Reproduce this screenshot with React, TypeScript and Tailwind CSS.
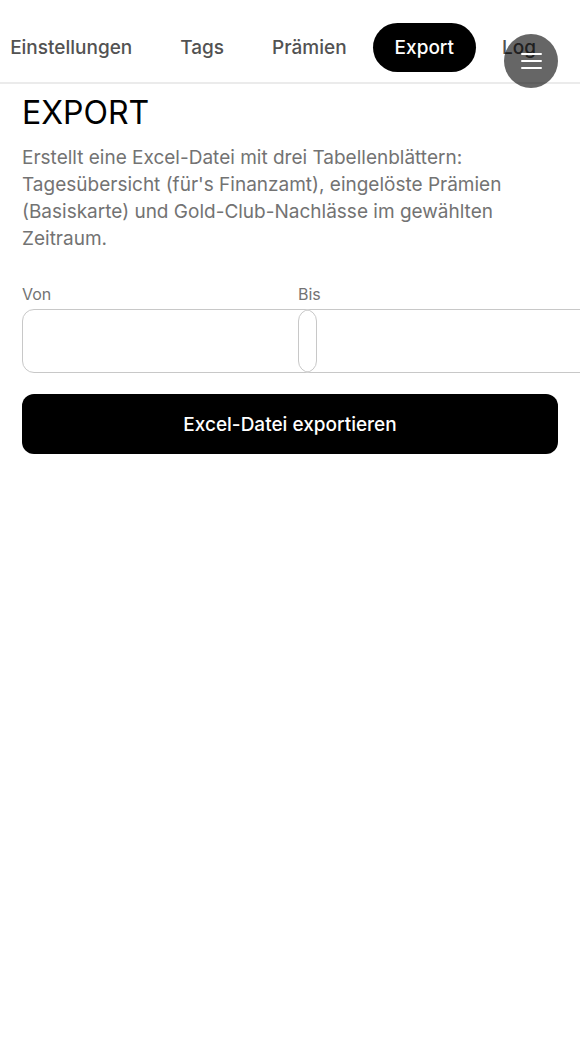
import React, { useState } from 'react';

const TABS = ['Einstellungen', 'Tags', 'Prämien', 'Export', 'Log'];

interface DateFieldProps {
  id: string;
  label: string;
  value: string;
  onChange: (value: string) => void;
}

const DateField: React.FC<DateFieldProps> = ({ id, label, value, onChange }) => (
  <div className="min-w-0">
    <label htmlFor={id} className="block text-base leading-6 text-[#737373] mb-[3px]">{label}</label>
    {/* Empty date fields stay blank, as on iOS */}
    <input
      type="date"
      id={id}
      value={value}
      onChange={(e) => onChange(e.target.value)}
      className={`block h-16 w-full min-w-[295px] rounded-xl border border-[#c8c8c8] bg-transparent px-4 text-[19px] text-black
        [&::-webkit-calendar-picker-indicator]:opacity-0
        ${value ? '' : '[&::-webkit-datetime-edit]:opacity-0'}`}
    />
  </div>
);

const App: React.FC = () => {
  const [activeTab, setActiveTab] = useState('Export');
  const [from, setFrom] = useState('');
  const [to, setTo] = useState('');

  return (
    <div className="min-h-screen overflow-x-hidden bg-white font-['Inter',sans-serif] text-black">
      <header className="border-b-2 border-[#ebebeb] pt-[23px] pb-[10px]">
        <nav className="flex justify-end gap-1 overflow-hidden pr-[22px]">
          {TABS.map((tab) => (
            <button
              key={tab}
              onClick={() => setActiveTab(tab)}
              className={`h-[49px] shrink-0 rounded-full px-[22px] pt-0.5 text-[19px] font-medium whitespace-nowrap
                ${activeTab === tab ? 'bg-black text-white' : 'text-[#525252]'}`}
            >
              {tab}
            </button>
          ))}
        </nav>
      </header>

      <button
        aria-label="Menü öffnen"
        className="fixed top-[34px] right-[22px] z-50 flex h-[54px] w-[54px] items-center justify-center rounded-full bg-black/60 text-white"
      >
        <svg className="h-[26px] w-[26px]" viewBox="0 0 26 26" fill="none" stroke="currentColor" strokeWidth="2" strokeLinecap="round">
          <path d="M4 6h19M4 13h19M4 20h19" />
        </svg>
      </button>

      <main className="px-[22px] pt-[9px]">
        <h1 className="text-[32px] leading-10 font-normal">EXPORT</h1>
        <p className="mt-[11px] text-[19px] leading-[27px] text-[#737373]">
          Erstellt eine Excel-Datei mit drei Tabellenblättern: Tagesübersicht (für's Finanzamt), eingelöste Prämien (Basiskarte) und Gold-Club-Nachlässe im gewählten Zeitraum.
        </p>

        <div className="mt-[30px] grid grid-cols-2 gap-4">
          <DateField id="from" label="Von" value={from} onChange={setFrom} />
          <DateField id="to" label="Bis" value={to} onChange={setTo} />
        </div>

        <button className="mt-[21px] h-[60px] w-full rounded-xl bg-black pt-0.5 text-[19px] font-medium text-white">
          Excel-Datei exportieren
        </button>
      </main>
    </div>
  );
};

export default App;
